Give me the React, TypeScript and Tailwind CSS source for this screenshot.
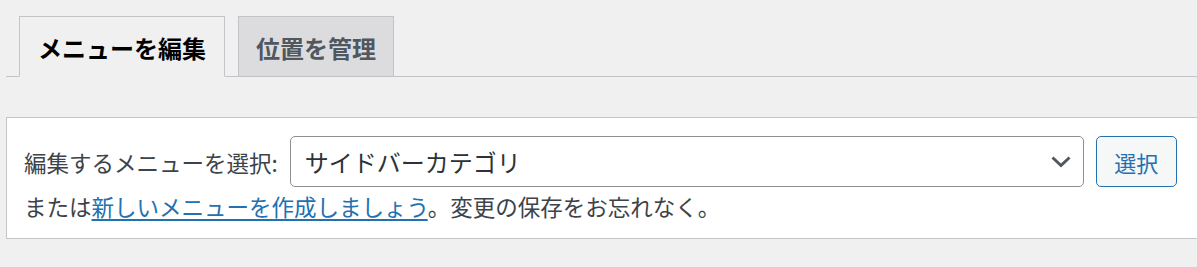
import React from "react";

function ChevronDown() {
  return (
    <svg width="20" height="12" viewBox="0 0 20 12" fill="none" className="shrink-0">
      <path d="M1.5 1.5 L10 9.5 L18.5 1.5" stroke="#50575e" strokeWidth="3" strokeLinecap="butt" />
    </svg>
  );
}

export default function App() {
  return (
    <div className="min-h-[267px] bg-[#f0f0f1] pl-[6px] pt-[16px] font-['Noto_Sans_CJK_JP',sans-serif] text-[#3c434a]">
      {/* tabs */}
      <nav className="flex items-end gap-[13px] border-b border-[#c3c4c7] pl-[13px]">
        <a className="-mb-px flex h-[61px] items-center border border-[#c3c4c7] border-b-[#f0f0f1] bg-[#f0f0f1] px-[18px] pt-[2px] text-[24px] font-semibold leading-none text-black">
          メニューを編集
        </a>
        <a className="-mb-px flex h-[61px] items-center border border-[#c3c4c7] bg-[#dcdcde] px-[17px] pt-[2px] text-[24px] font-semibold leading-none text-[#50575e]">
          位置を管理
        </a>
      </nav>

      {/* manage menus card */}
      <div className="mt-[40px] border border-r-0 border-[#c3c4c7] bg-white pb-[17px] pl-[17px] pt-[18px]">
        <div className="flex items-center">
          <label className="mr-[12px] text-[22.5px] leading-[30px]">編集するメニューを選択:</label>
          <div className="flex h-[51px] w-[794px] items-center justify-between rounded-[5px] border border-[#8c8f94] bg-white pl-[14px] pr-[12px] text-[24px] leading-none text-[#2c3338]">
            <span>サイドバーカテゴリ</span>
            <ChevronDown />
          </div>
          <button className="ml-[12px] flex h-[51px] w-[81px] items-center justify-center rounded-[5px] border border-[#2271b1] bg-[#f6f7f7] text-[22px] leading-none text-[#2271b1]">
            選択
          </button>
        </div>
        <p className="mt-[4px] text-[22.5px] leading-[30px]">
          または
          <a className="text-[#2271b1] underline underline-offset-[3px]">新しいメニューを作成しましょう</a>
          。変更の保存をお忘れなく。
        </p>
      </div>
    </div>
  );
}
